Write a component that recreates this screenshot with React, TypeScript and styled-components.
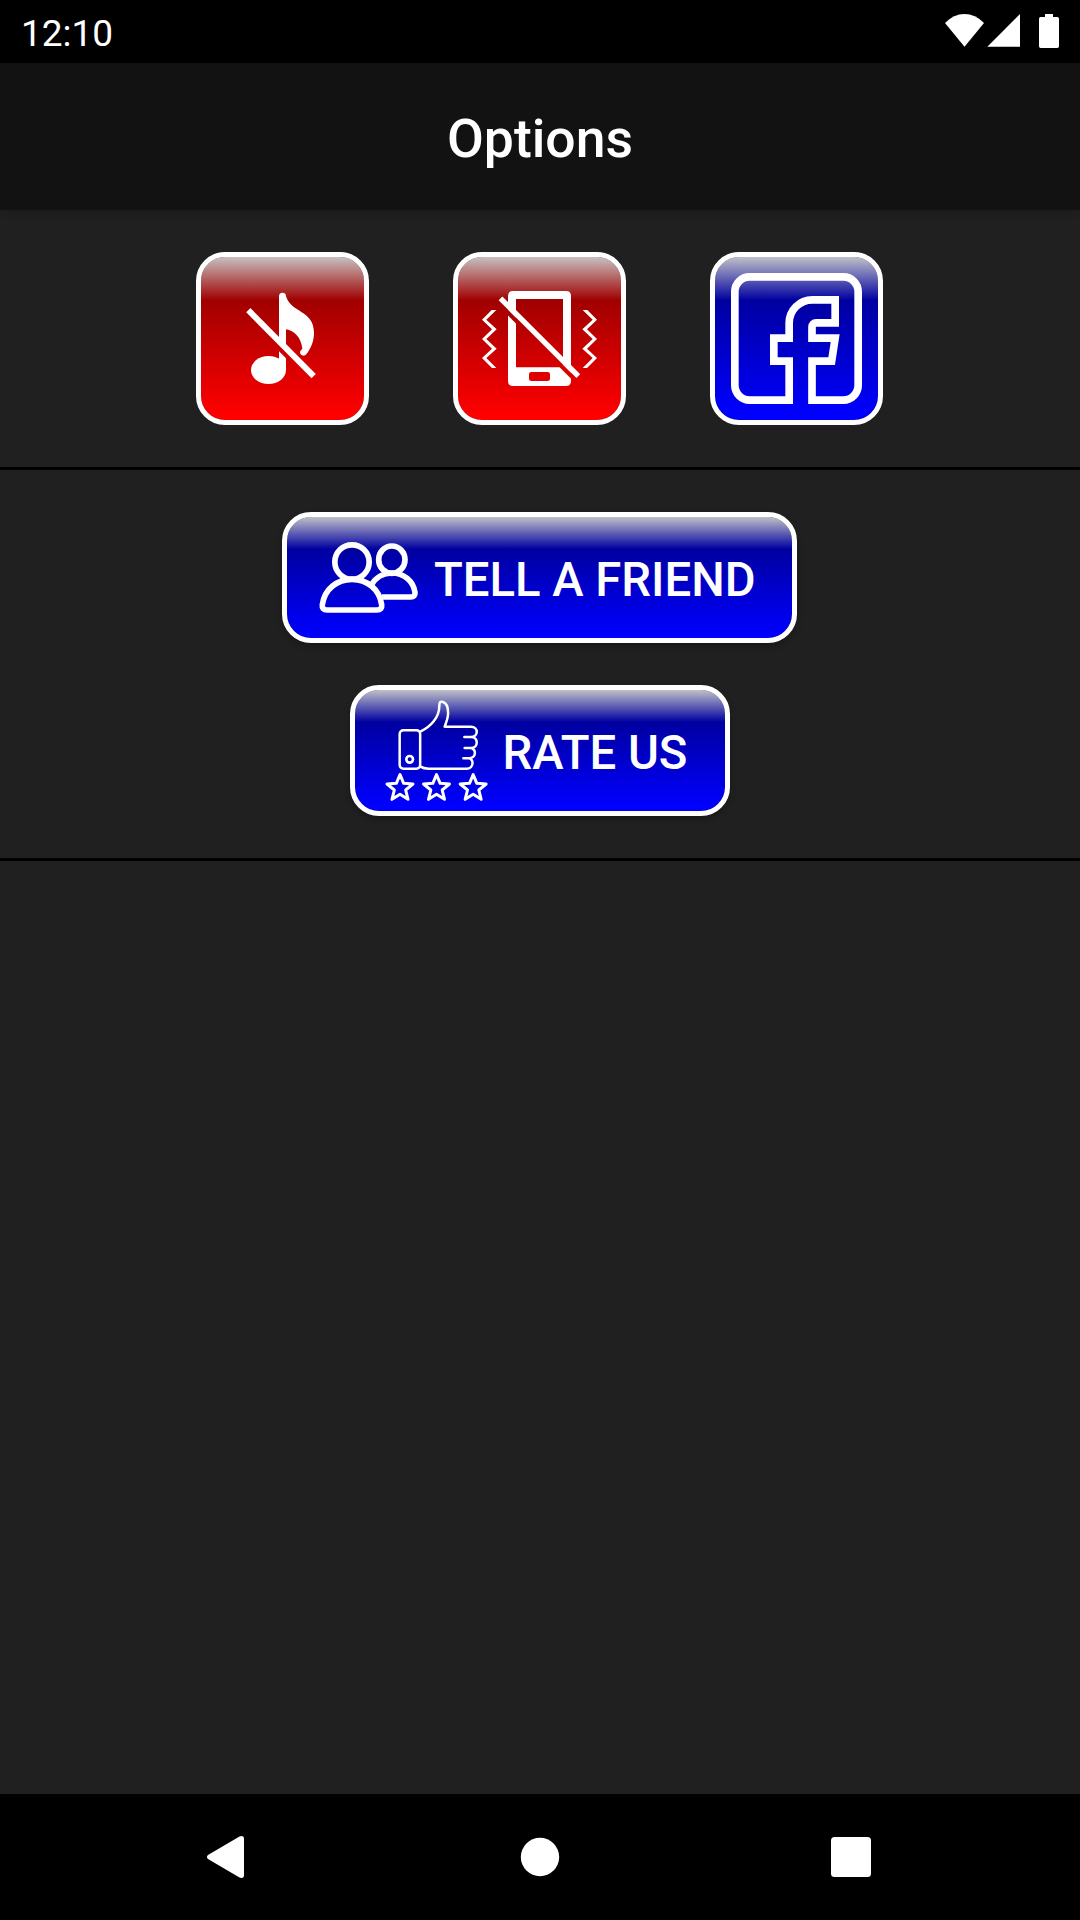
import React from "react";
import styled, { createGlobalStyle } from "styled-components";

const GlobalStyle = createGlobalStyle`
  *, *::before, *::after { box-sizing: border-box; }
  body { margin: 0; background: #202020; font-family: Roboto, "Noto Sans", sans-serif; color: #fff; }
  svg { display: block; flex: none; }
`;

const Screen = styled.div`
  display: flex;
  flex-direction: column;
  width: 1080px;
  height: 1920px;
  background: #202020;
  overflow: hidden;
`;

const StatusBar = styled.div`
  display: flex;
  flex: none;
  justify-content: space-between;
  height: 63px;
  padding-left: 21px;
  background: #000;
`;

const Clock = styled.span`
  padding-top: 2px;
  font-size: 37px;
  line-height: 63px;
`;

const Header = styled.header`
  display: flex;
  flex: none;
  align-items: center;
  justify-content: center;
  height: 147px;
  background: #121212;
  box-shadow: 0 2px 8px rgba(0, 0, 0, 0.2);
`;

const Title = styled.h1`
  margin: 0 0 -4px;
  font-size: 53.5px;
  font-weight: 500;
  line-height: 62px;
`;

const Content = styled.main`
  flex: 1;
`;

const Section = styled.section<{ $direction: "row" | "column"; $gap: number }>`
  display: flex;
  flex-direction: ${(p) => p.$direction};
  align-items: center;
  justify-content: center;
  gap: ${(p) => p.$gap}px;
  padding: 42px 1px 42px 0;
  border-bottom: 3px solid #000;
`;

const palettes = {
  red: "#c8c0c0 0%, #a00000 26.5%, #ff0000 97%",
  blue: "#c0c0c8 0%, #0000a0 26.5%, #0000ff 97%",
};

const GlossyButton = styled.button<{ $tone: keyof typeof palettes }>`
  display: flex;
  align-items: center;
  padding: 0;
  border: 5px solid #fff;
  border-radius: 29px;
  background: linear-gradient(${(p) => palettes[p.$tone]}) padding-box;
  color: #fff;
  font-family: inherit;
`;

const SquareButton = styled(GlossyButton)`
  width: 173px;
  height: 173px;
`;

const WideButton = styled(GlossyButton)<{ $width: number; $inset: number; $gap: number }>`
  width: ${(p) => p.$width}px;
  height: 131px;
  padding-left: ${(p) => p.$inset}px;
  gap: ${(p) => p.$gap}px;
  box-shadow: 0 3px 6px rgba(0, 0, 0, 0.25);
`;

const Label = styled.span`
  padding-top: 4px;
  font-size: 47.25px;
  font-weight: 500;
  line-height: 56px;
  white-space: nowrap;
`;

const NavBar = styled.nav`
  display: flex;
  flex: none;
  align-items: center;
  justify-content: space-between;
  height: 126px;
  padding: 0 208px 0 205px;
  background: #000;
`;

const StatusIcons = () => (
  <svg width="160" height="63" viewBox="0 0 480 189" fill="#fff">
    <path d="M75 69Q101 42 133.500 42T192 69L133.500 140Z" />
    <path d="M300 42V140H202Z" />
    <path d="M375 42H399V51H412Q417 51 417 56V139Q417 144 412 144H362Q357 144 357 139V56Q357 51 362 51H375Z" />
  </svg>
);

const MusicOffIcon = () => (
  <svg width="163" height="163" viewBox="45 45 489 489" fill="#fff">
    <path d="M279 290V163A10.500 10.500 0 0 1 300 163C314 212 384 205 384 272C384 298 374 320 361 337A11 11 0 0 1 342 333Q341 326 349 320C345 286 325 266 300 262V310Z" />
    <path d="M279 328L300 349V384H279Z" />
    <ellipse cx="247.500" cy="384" rx="52.500" ry="42" />
    <path d="M187 204.500L383 402.500" stroke="#fff" strokeWidth="18" />
  </svg>
);

const zigzag =
  "143,204 114,233 144,262 114,291 144,320 114,348 144,378 157,378 127,348 158,320 127,291 158,262 127,233 157,204";

const VibrationOffIcon = () => (
  <svg width="163" height="163" viewBox="42 45 489 489" fill="#fff">
    <mask id="phone-cut" maskUnits="userSpaceOnUse" x="42" y="45" width="489" height="489">
      <rect x="42" y="45" width="489" height="489" fill="#fff" />
      <path d="M150 170L430 450" stroke="#000" strokeWidth="12.500" />
    </mask>
    <path
      mask="url(#phone-cut)"
      fillRule="evenodd"
      d="M207 147H366Q381 147 381 162V417Q381 432 366 432H207Q192 432 192 417V162Q192 147 207 147ZM216 171V376H357V171ZM262 390Q255 390 255 397V410Q255 417 262 417H311Q318 417 318 410V397Q318 390 311 390Z"
    />
    <path d="M169.500 169L403 402.500" stroke="#fff" strokeWidth="16" />
    <polygon points={zigzag} />
    <polygon points={zigzag} transform="translate(573 0) scale(-1 1)" />
  </svg>
);

const FacebookIcon = () => (
  <svg width="163" height="163" viewBox="45 45 489 489" fill="none" stroke="#fff" strokeWidth="23">
    <path d="M267.500 474.500V357.500H221.500V288.500H267.500V243A69.500 69.500 0 0 1 337 173.500H405.500V242.500H348A12 12 0 0 0 336 254.500V288.500H405.500L395 357.500H336V474.500H430A44.500 44.500 0 0 0 474.500 430V149A44.500 44.500 0 0 0 430 104.500H149A44.500 44.500 0 0 0 104.500 149V430A44.500 44.500 0 0 0 149 474.500Z" />
  </svg>
);

const FriendsIcon = () => (
  <svg width="115" height="121" viewBox="120 51 345 363" fill="none" stroke="#fff" strokeWidth="17">
    <ellipse cx="246" cy="186" rx="51.500" ry="51.500" />
    <path d="M171 330H321Q337 330 335 314C328 266 290 238 246 238S164 266 157 314Q155 330 171 330Z" />
    <ellipse cx="365.500" cy="179" rx="39.500" ry="41" />
    <path d="M336 291H422Q436 291 435 277C430 243 401 219 366 219C340 219 317 233 305 254" />
  </svg>
);

const star = "M0-41L11-15L39-13L17 5L24 33L0 18L-24 33L-17 5L-39-13L-11-15Z";

const RateIcon = () => (
  <svg
    width="112"
    height="121"
    viewBox="120 48 336 363"
    fill="none"
    stroke="#fff"
    strokeWidth="7.500"
    strokeLinecap="round"
    strokeLinejoin="round"
  >
    <rect x="179" y="169" width="61.500" height="115" rx="11" />
    <circle cx="209" cy="256" r="10" strokeWidth="8" />
    <path d="M241 173C272 158 298 131 298 95C298 84 301 81 309 84C324 89 325 107 324 123C323 136 318 146 314 158H393C416 158 416 189 393 189H373M393 189C416 189 416 222 393 222H374M390 222C410 222 410 253 387 253H370M385 253C403 253 402 284 380 284H266Q251 284 241 278" />
    {[180, 289.5, 399.5].map((x) => (
      <path key={x} d={star} strokeWidth="9" transform={`translate(${x} 343)`} />
    ))}
  </svg>
);

const BackIcon = () => (
  <svg width="45" height="42" viewBox="0 0 45 42" fill="#fff">
    <path d="M3 19L34.500 0.500Q39 -1 39 3V39Q39 43 34.500 41.500L3 23Q0.800 21 3 19Z" />
  </svg>
);

const HomeIcon = () => (
  <svg width="42" height="42" viewBox="0 0 42 42" fill="#fff">
    <circle cx="21" cy="21" r="19.200" />
  </svg>
);

const RecentsIcon = () => (
  <svg width="42" height="42" viewBox="0 0 42 42" fill="#fff">
    <rect x="1" y="1" width="40" height="40" rx="3.500" />
  </svg>
);

export default function App() {
  return (
    <Screen>
      <GlobalStyle />
      <StatusBar>
        <Clock>12:10</Clock>
        <StatusIcons />
      </StatusBar>
      <Header>
        <Title>Options</Title>
      </Header>
      <Content>
        <Section $direction="row" $gap={84}>
          <SquareButton $tone="red" aria-label="Sound">
            <MusicOffIcon />
          </SquareButton>
          <SquareButton $tone="red" aria-label="Vibration">
            <VibrationOffIcon />
          </SquareButton>
          <SquareButton $tone="blue" aria-label="Facebook">
            <FacebookIcon />
          </SquareButton>
        </Section>
        <Section $direction="column" $gap={42}>
          <WideButton $tone="blue" $width={515} $inset={23} $gap={9}>
            <FriendsIcon />
            <Label>TELL A FRIEND</Label>
          </WideButton>
          <WideButton $tone="blue" $width={380} $inset={25} $gap={11}>
            <RateIcon />
            <Label>RATE US</Label>
          </WideButton>
        </Section>
      </Content>
      <NavBar>
        <BackIcon />
        <HomeIcon />
        <RecentsIcon />
      </NavBar>
    </Screen>
  );
}
